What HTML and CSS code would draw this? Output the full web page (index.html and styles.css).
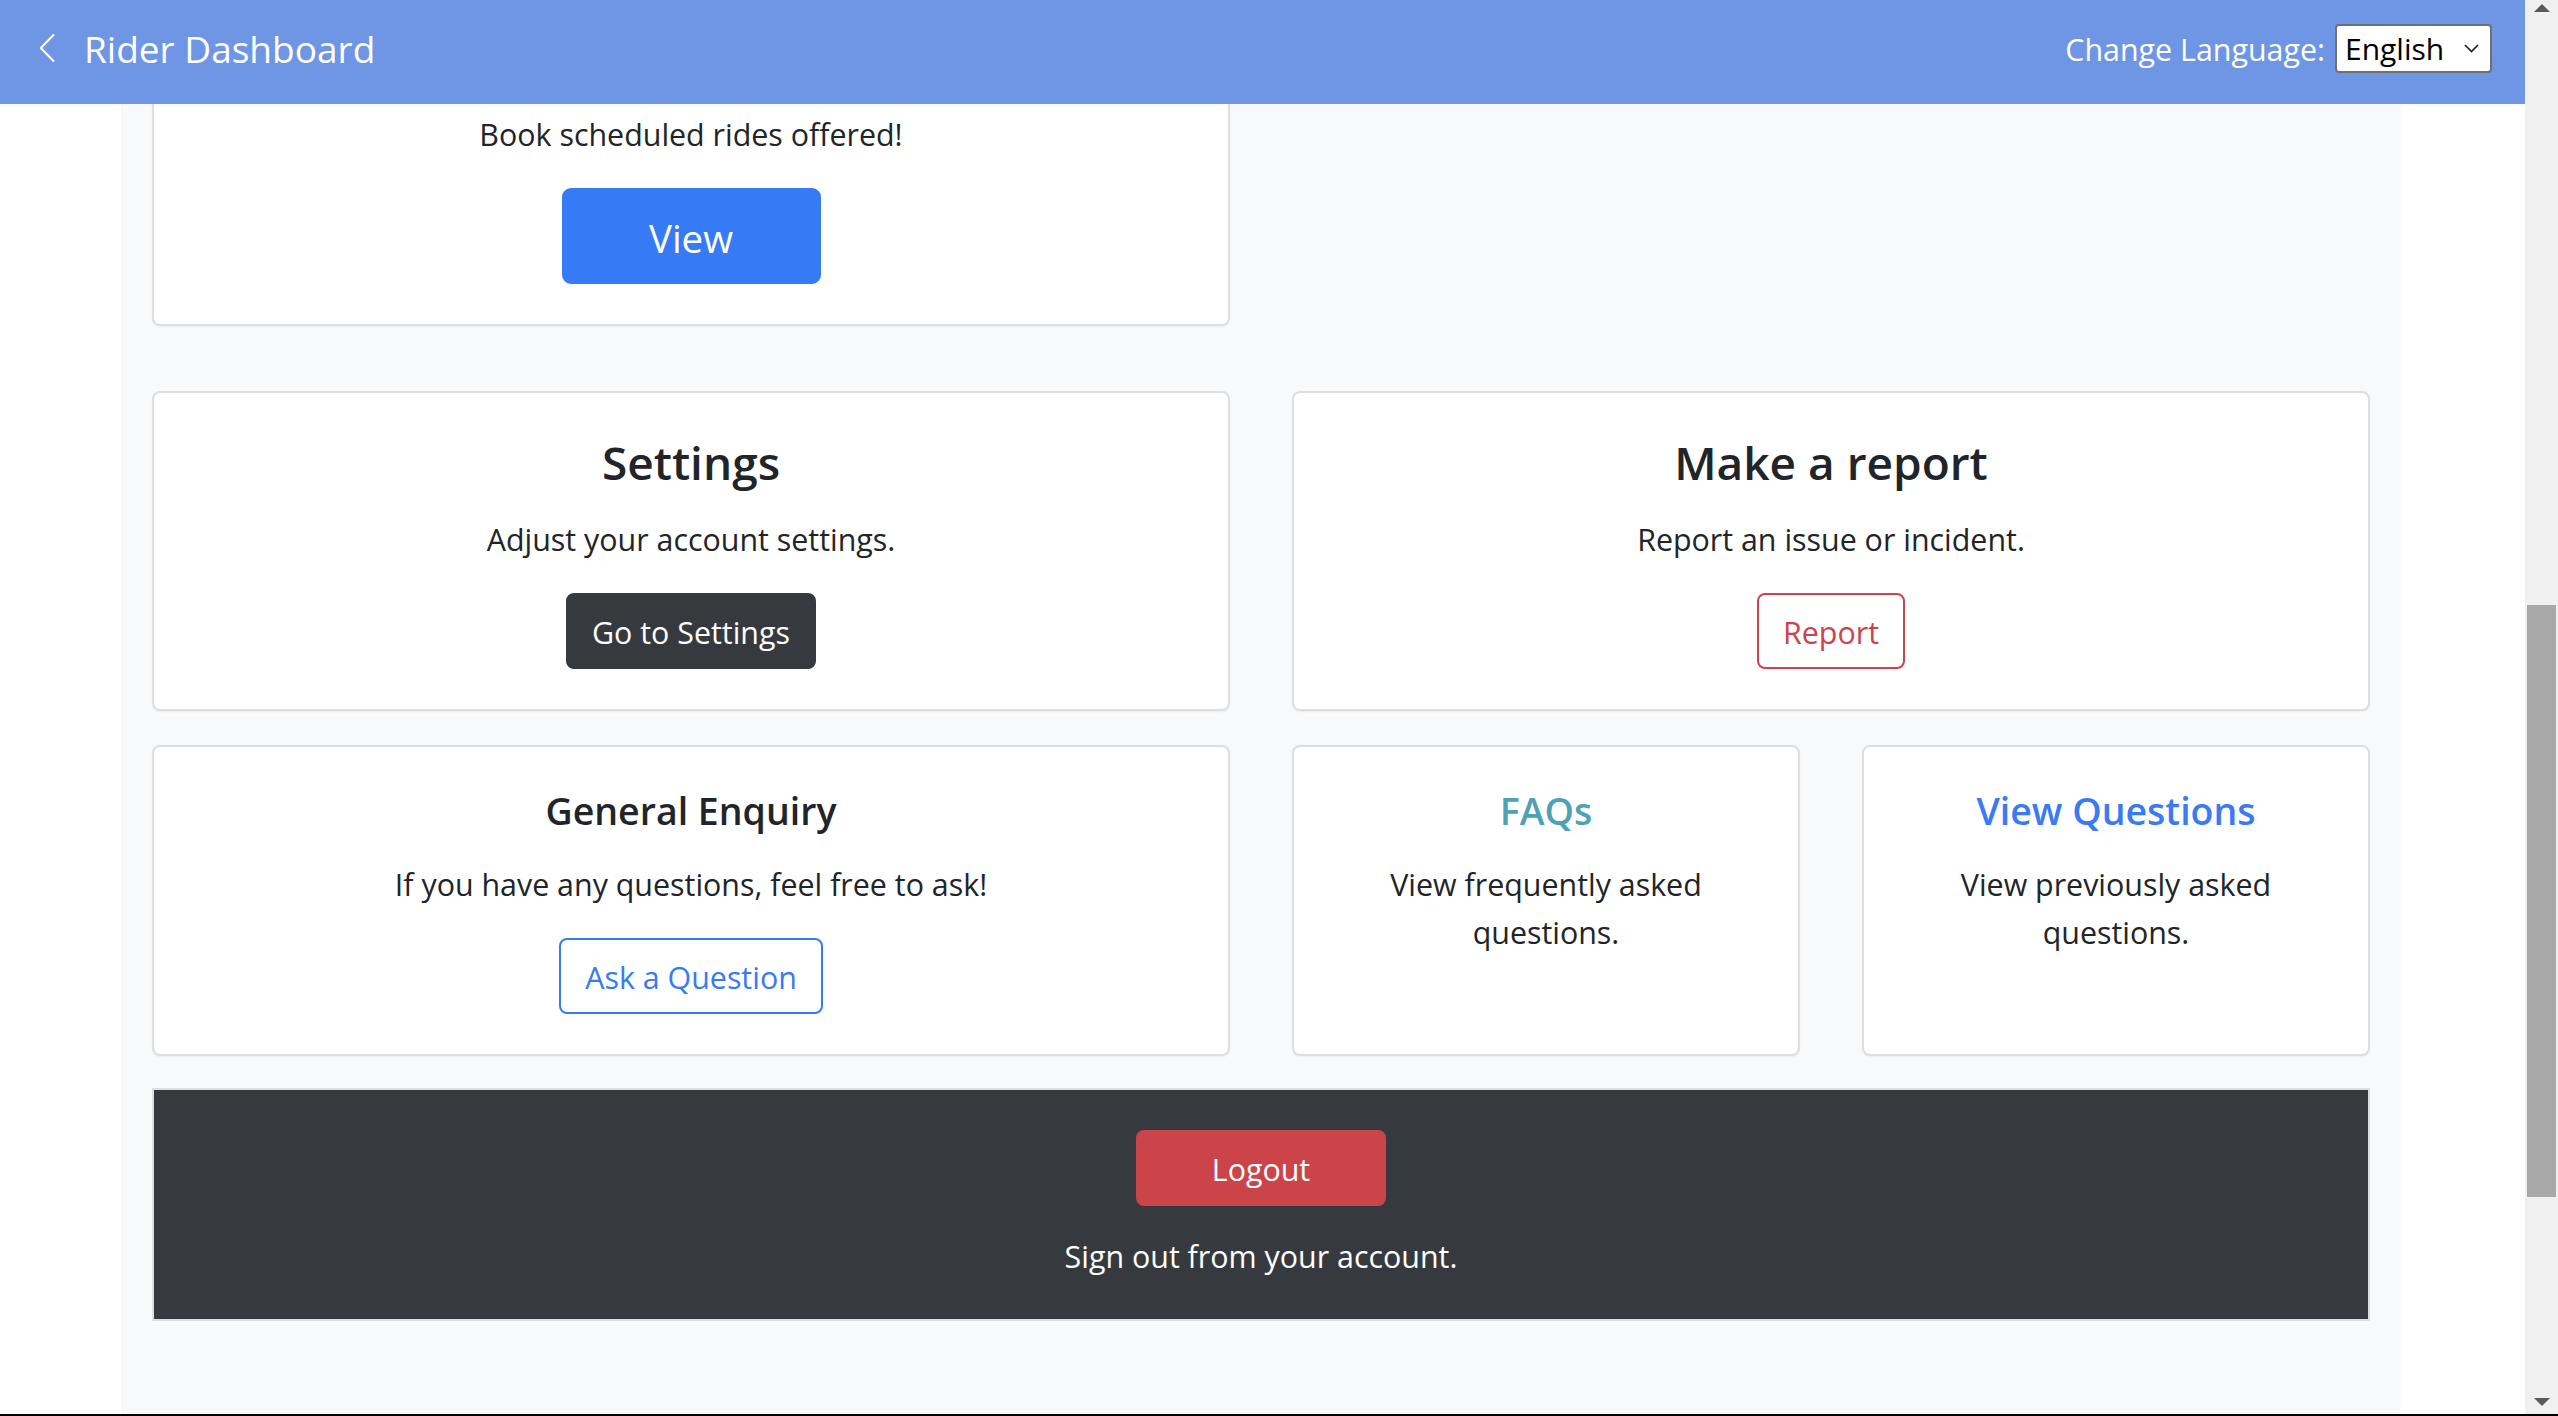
FILE: index.html
```html
<!DOCTYPE html>
<html lang="en">
<head>
<meta charset="utf-8">
<title>Rider Dashboard</title>
<link rel="stylesheet" href="styles.css">
</head>
<body>
<div class="window">
  <div class="page">
    <header class="topbar">
      <div class="topbar-left">
        <svg class="back-icon" viewBox="0 0 16 28" width="16" height="28" aria-hidden="true">
          <polyline points="14.5,1 1.8,14 14.5,27" fill="none" stroke="#ffffff" stroke-width="2" stroke-linecap="round" stroke-linejoin="round"/>
        </svg>
        <span class="topbar-title">Rider Dashboard</span>
      </div>
      <div class="topbar-right">
        <span class="lang-label">Change Language:</span>
        <div class="lang-select">
          <span>English</span>
          <svg class="select-chevron" viewBox="0 0 15 9" width="15" height="9" aria-hidden="true">
            <polyline points="1,1 7.5,7.5 14,1" fill="none" stroke="#222222" stroke-width="1.7"/>
          </svg>
        </div>
      </div>
    </header>

    <main class="content">
      <div class="container">
        <div class="grid row-1">
          <section class="card card-cut span-2">
            <p class="card-text">Book scheduled rides offered!</p>
            <button class="btn btn-primary btn-lg">View</button>
          </section>
        </div>

        <div class="grid row-2">
          <section class="card span-2">
            <h3 class="card-title-lg">Settings</h3>
            <p class="card-text">Adjust your account settings.</p>
            <button class="btn btn-dark">Go to Settings</button>
          </section>
          <section class="card span-2">
            <h3 class="card-title-lg">Make a report</h3>
            <p class="card-text">Report an issue or incident.</p>
            <button class="btn btn-outline-danger">Report</button>
          </section>
        </div>

        <div class="grid row-3">
          <section class="card span-2">
            <h5 class="card-title">General Enquiry</h5>
            <p class="card-text">If you have any questions, feel free to ask!</p>
            <button class="btn btn-outline-primary">Ask a Question</button>
          </section>
          <section class="card">
            <h5 class="card-title title-info">FAQs</h5>
            <p class="card-text">View frequently asked questions.</p>
          </section>
          <section class="card">
            <h5 class="card-title title-primary">View Questions</h5>
            <p class="card-text">View previously asked questions.</p>
          </section>
        </div>

        <section class="footer-card">
          <button class="btn btn-danger btn-logout">Logout</button>
          <p class="footer-text">Sign out from your account.</p>
        </section>
      </div>
    </main>
  </div>

  <div class="scrollbar" aria-hidden="true">
    <div class="sb-btn">
      <svg viewBox="0 0 16 8" width="16" height="8"><polygon points="0,8 8,0 16,8" fill="#5a5a5a"/></svg>
    </div>
    <div class="sb-track">
      <div class="sb-thumb"></div>
    </div>
    <div class="sb-btn sb-btn-down">
      <svg viewBox="0 0 16 8" width="16" height="8"><polygon points="0,0 16,0 8,8" fill="#5a5a5a"/></svg>
    </div>
  </div>
</div>
<div class="screen-edge"></div>
</body>
</html>
```

FILE: styles.css
```css
* {
  box-sizing: border-box;
}

html,
body {
  margin: 0;
  padding: 0;
  overflow: hidden;
}

body {
  height: 1416px;
  display: flex;
  flex-direction: column;
  font-family: "Open Sans", "Noto Sans", "Liberation Sans", sans-serif;
  font-size: 30.4px;
  color: #212529;
  background: #ffffff;
}

.window {
  display: flex;
  height: 1414px;
}

.screen-edge {
  height: 2px;
  background: #000000;
}

.page {
  flex: 1;
  min-width: 0;
  display: flex;
  flex-direction: column;
}

/* ---------- top bar ---------- */
.topbar {
  height: 104px;
  flex: 0 0 104px;
  background: #6f95e5;
  color: #ffffff;
  display: flex;
  align-items: center;
  justify-content: space-between;
  padding: 0 33px 8px 39px;
}

.topbar-left {
  display: flex;
  align-items: center;
}

.back-icon {
  display: block;
  margin-right: 29px;
}

.topbar-title {
  font-size: 37px;
  font-weight: 400;
  line-height: normal;
}

.topbar-right {
  display: flex;
  align-items: center;
}

.lang-label {
  font-size: 30.4px;
  line-height: normal;
  padding-top: 2px;
  margin-right: 10px;
}

.lang-select {
  width: 157px;
  height: 49px;
  display: flex;
  align-items: center;
  justify-content: space-between;
  padding: 0 11px 0 8px;
  background: #ffffff;
  color: #000000;
  border: 2px solid #707070;
  border-radius: 4px;
  font-size: 30px;
  line-height: normal;
}

.select-chevron {
  display: block;
}

/* ---------- content ---------- */
.content {
  flex: 1;
  display: flex;
  overflow: hidden;
  background: #ffffff;
}

.container {
  width: 2280px;
  margin-left: 121px;
  background: #f8f9fa;
  padding: 0 31px;
  display: flex;
  flex-direction: column;
}

.grid {
  display: grid;
  grid-template-columns: repeat(4, 1fr);
  column-gap: 62px;
}

.row-1 {
  margin-top: -40px;
}

.row-2 {
  margin-top: 65.5px;
}

.row-3 {
  margin-top: 34px;
}

.span-2 {
  grid-column: span 2;
}

.card {
  background: #ffffff;
  border: 2px solid #dedede;
  border-radius: 8px;
  box-shadow: 0 1px 2px rgba(0, 0, 0, 0.05);
  padding: 40px;
  text-align: center;
}

.card-cut {
  padding-top: 42.5px;
}

.card-title-lg {
  font-size: 46px;
  font-weight: 600;
  line-height: 58px;
  margin: 0 0 23px;
}

.card-title {
  font-size: 37.5px;
  font-weight: 600;
  line-height: 48px;
  margin: 0 0 24.2px;
}

.title-info {
  color: #4fa2b5;
}

.title-primary {
  color: #3a7af3;
}

.card-text {
  margin: 0 0 29px;
  padding-top: 2px;
  line-height: 48px;
}

/* ---------- buttons ---------- */
.btn {
  display: inline-block;
  font-family: inherit;
  font-size: 30.4px;
  font-weight: 400;
  line-height: 48px;
  padding: 14px 24px 10px;
  border: 2px solid transparent;
  border-radius: 8px;
  background: transparent;
  cursor: pointer;
}

.btn-lg {
  font-size: 38.5px;
  line-height: 60px;
  padding: 18px 0 14px;
  width: 259px;
  border-radius: 9px;
}

.btn-primary {
  background: #377af5;
  border-color: #377af5;
  color: #ffffff;
}

.btn-dark {
  background: #363a3f;
  border-color: #363a3f;
  color: #ffffff;
}

.btn-outline-danger {
  color: #cd434b;
  border-color: #cd434b;
  background: #ffffff;
}

.btn-outline-primary {
  color: #377af5;
  border-color: #377af5;
  background: #ffffff;
}

.btn-danger {
  background: #cb444a;
  border-color: #cb444a;
  color: #ffffff;
}

.btn-logout {
  width: 250px;
  padding: 14px 0 10px;
}

/* ---------- footer card ---------- */
.footer-card {
  margin-top: 32px;
  background: #363a3f;
  border: 2px solid #dedede;
  padding: 40px 40px 38px;
  text-align: center;
  color: #ffffff;
}

.footer-text {
  margin: 27px 0 0;
  line-height: 48px;
}

/* ---------- scrollbar ---------- */
.scrollbar {
  width: 33px;
  flex: 0 0 33px;
  background: #f0f0f0;
  display: flex;
  flex-direction: column;
}

.sb-btn {
  height: 15px;
  display: flex;
  align-items: center;
  justify-content: center;
}

.sb-btn svg {
  display: block;
}

.sb-btn-down {
  margin-bottom: 5px;
}

.sb-track {
  flex: 1;
  padding: 590px 2px 0;
}

.sb-thumb {
  height: 592px;
  background: #a8a8a8;
}
```
